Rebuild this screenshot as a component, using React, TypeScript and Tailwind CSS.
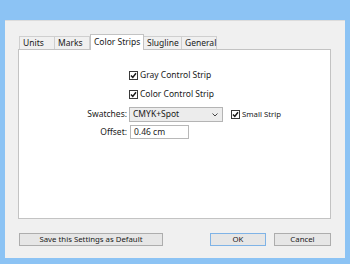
import React from "react";

const font = { fontFamily: '"Noto Sans", "Open Sans", sans-serif' };

function Check() {
  return (
    <span className="w-[9px] h-[9px] border border-[#3a3a3a] bg-white flex items-center justify-center shrink-0">
      <svg width="7" height="7" viewBox="0 0 7 7">
        <path d="M1 3.4 L2.8 5.4 L6 1.2" fill="none" stroke="#1a1a1a" strokeWidth="1.5" />
      </svg>
    </span>
  );
}

function Tab({ label, w, active }: { label: string; w: string; active?: boolean }) {
  if (active) {
    return (
      <div
        className={`${w} h-[16px] -mb-px relative z-10 bg-white border border-b-0 border-[#c3c3c3] flex items-center pl-[3px] text-[8.5px] text-[#1a1a1a] pb-[1px]`}
      >
        {label}
      </div>
    );
  }
  return (
    <div
      className={`${w} h-[13px] bg-[#f0f0f0] border border-b-0 border-l-0 first:border-l border-[#cfcfcf] flex items-center pl-[3px] text-[8.5px] text-[#1a1a1a]`}
    >
      {label}
    </div>
  );
}

export default function App() {
  return (
    <div style={font} className="w-[350px] h-[264px] bg-[#8cc3f4] pt-[20px] px-[5px] pb-[6px] flex">
      <div className="flex-1 bg-[#f0f0f0] border-t border-[#dcdcdc] flex flex-col pl-[13px] pr-[14px] pt-[13px]">
        <div className="h-[15px] flex items-end pl-[1px]">
          <Tab label="Units" w="w-[36px]" />
          <Tab label="Marks" w="w-[35px]" />
          <Tab label="Color Strips" w="w-[54px]" active />
          <Tab label="Slugline" w="w-[38px]" />
          <Tab label="General" w="w-[35px]" />
        </div>
        <div className="h-[170px] bg-white border border-[#c3c3c3] flex flex-col text-[8.5px] text-[#1a1a1a]">
          <div className="mt-[16px] h-[18px] flex items-center pl-[110px]">
            <Check />
            <span className="ml-[2px]">Gray Control Strip</span>
          </div>
          <div className="mt-[1px] h-[18px] flex items-center pl-[110px]">
            <Check />
            <span className="ml-[2px]">Color Control Strip</span>
          </div>
          <div className="mt-[4px] h-[15px] flex items-center">
            <span className="w-[110px] text-right pr-[2px]">Swatches:</span>
            <div className="w-[94px] h-[15px] border border-[#b4b4b4] bg-[#ececec] flex items-center pl-[3px] pr-[4px]">
              <span className="flex-1">CMYK+Spot</span>
              <svg width="6" height="4" viewBox="0 0 6 4">
                <path d="M0.5 0.5 L3 3 L5.5 0.5" fill="none" stroke="#444" strokeWidth="1" />
              </svg>
            </div>
            <div className="ml-[8px] flex items-center self-start mt-[2px]">
              <Check />
              <span className="ml-[2px] text-[7.8px]">Small Strip</span>
            </div>
          </div>
          <div className="mt-[3px] h-[14px] flex items-center">
            <span className="w-[110px] text-right pr-[2px]">Offset:</span>
            <div className="ml-[1px] w-[59px] h-[14px] border border-[#b8b8b8] bg-white flex items-center pl-[3px]">
              0.46 cm
            </div>
          </div>
        </div>
        <div className="mt-[14px] flex items-start text-[7.8px] text-[#1a1a1a]">
          <div className="ml-[1px] w-[144px] h-[13px] border border-[#adadad] bg-[#e6e6e6] flex items-center justify-center">
            Save this Settings as Default
          </div>
          <div className="ml-auto w-[56px] h-[13px] border border-[#7fb3e6] bg-[#e6e6e6] flex items-center justify-center">
            OK
          </div>
          <div className="ml-[8px] w-[57px] h-[13px] border border-[#adadad] bg-[#e6e6e6] flex items-center justify-center">
            Cancel
          </div>
        </div>
      </div>
    </div>
  );
}
